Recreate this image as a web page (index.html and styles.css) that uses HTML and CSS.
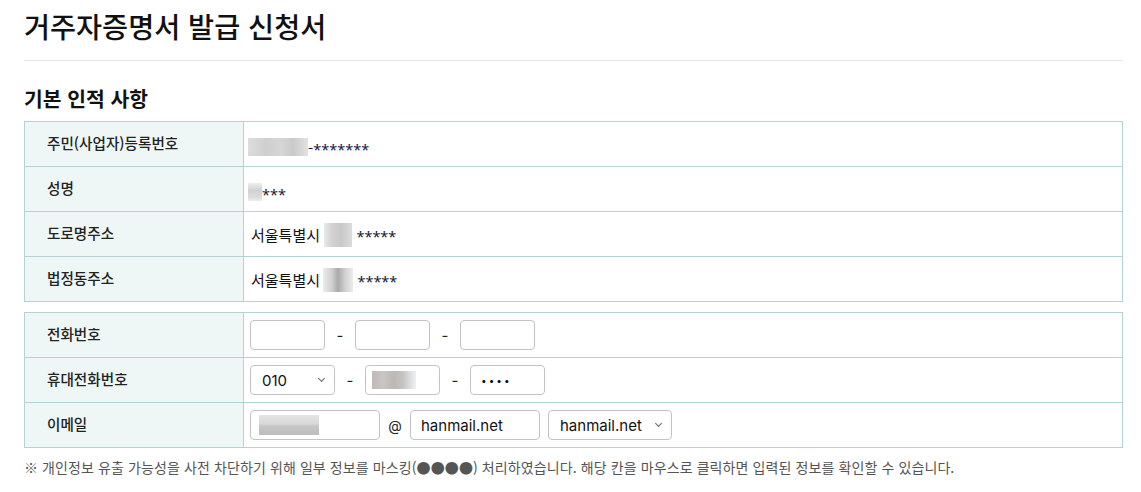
FILE: index.html
```html
<!DOCTYPE html>
<html lang="ko">
<head>
<meta charset="utf-8">
<title>거주자증명서 발급 신청서</title>
<link rel="stylesheet" href="styles.css">
</head>
<body>
<div class="page">
  <h1 class="title">거주자증명서 발급 신청서</h1>
  <h2 class="section">기본 인적 사항</h2>
  <table class="info">
    <tr>
      <th>주민(사업자)등록번호</th>
      <td class="v v-top"><span class="blur b-rrn"></span>-<span class="ast">*******</span></td>
    </tr>
    <tr>
      <th>성명</th>
      <td class="v v-top"><span class="blur b-name"></span><span class="ast">***</span></td>
    </tr>
    <tr>
      <th>도로명주소</th>
      <td class="v v-addr">서울특별시 <span class="blur b-addr"></span> <span class="ast">*****</span></td>
    </tr>
    <tr>
      <th>법정동주소</th>
      <td class="v v-addr">서울특별시 <span class="blur b-addr2"></span> <span class="ast">*****</span></td>
    </tr>
  </table>

  <table class="info second">
    <tr>
      <th>전화번호</th>
      <td>
        <div class="fields">
          <span class="box w75"></span><span class="dash">-</span>
          <span class="box w75"></span><span class="dash">-</span>
          <span class="box w75"></span>
        </div>
      </td>
    </tr>
    <tr>
      <th>휴대전화번호</th>
      <td>
        <div class="fields">
          <span class="box sel w85"><span>010</span><span class="chev"></span></span><span class="dash">-</span>
          <span class="box w75"><span class="blur b-phone"></span></span><span class="dash">-</span>
          <span class="box w75 dots">••••</span>
        </div>
      </td>
    </tr>
    <tr>
      <th>이메일</th>
      <td>
        <div class="fields">
          <span class="box w130"><span class="blur b-mail"></span></span><span class="at">@</span>
          <span class="box w130 txt">hanmail.net</span>
          <span class="box sel w124 gapl"><span>hanmail.net</span><span class="chev"></span></span>
        </div>
      </td>
    </tr>
  </table>
  <p class="note">※ 개인정보 유출 가능성을 사전 차단하기 위해 일부 정보를 마스킹(●●●●) 처리하였습니다. 해당 칸을 마우스로 클릭하면 입력된 정보를 확인할 수 있습니다.</p>
</div>
</body>
</html>
```
FILE: styles.css
```css
* { box-sizing: border-box; }
body {
  margin: 0;
  background: #fff;
  font-family: "Noto Sans CJK KR", "Noto Sans", sans-serif;
  color: #222;
}
.page {
  padding: 0 18px 0 24px;
}
.title {
  margin: 0;
  padding-top: 6px;
  height: 61px;
  font-size: 28.3px;
  font-weight: 500;
  line-height: 40px;
  color: #111;
  border-bottom: 1px solid #e4e4e4;
}
.section {
  margin: 0;
  padding-top: 22px;
  height: 60px;
  font-size: 20.4px;
  font-weight: 700;
  line-height: 30px;
  color: #111;
}
.info {
  width: 100%;
  border-collapse: collapse;
  border: 1px solid #b5d3d6;
}
.info th, .info td {
  border: 1px solid #b5d3d6;
  height: 45px;
  padding: 0;
}
.info th {
  width: 219px;
  background: #eef7f6;
  text-align: left;
  font-weight: 500;
  font-size: 14.6px;
  color: #222;
  padding-left: 22px;
  padding-bottom: 3px;
}
.v {
  font-size: 15px;
  color: #111;
}
.ast {
  font-family: "Noto Sans", sans-serif;
  font-size: 14.5px;
  color: #1a1a2e;
  position: relative;
  top: 1px;
}
.v-top { padding: 6px 0 0 4px !important; }
.v-addr { padding: 3px 0 0 7px !important; }
.blur {
  display: inline-block;
  vertical-align: middle;
  background: linear-gradient(90deg, #ddd 0, #cfcfcf 30%, #d6d6d6 55%, #cacaca 75%, #e2e2e2 100%);
}
.b-rrn { width: 60px; height: 18px; margin-top: -4px; }
.b-name { width: 14px; height: 18px; margin-top: -4px; background: linear-gradient(180deg, #eee, #d2d2d2 40%, #dcdcdc 80%, #eee); }
.b-addr { width: 28px; height: 24px; margin-top: -4px; background: linear-gradient(90deg, #eaeaea 0, #d4d4d4 25%, #c8c8c8 60%, #dcdcdc 100%); }
.b-addr2 { width: 30px; height: 24px; margin-top: -4px; margin-left: -1px; background: linear-gradient(90deg, #ececec 0, #cfcfcf 30%, #a9a9a9 50%, #d2d2d2 75%, #ececec 100%); }
.second { margin-top: 10px; }
.second td { padding-left: 6px; }
.fields {
  display: flex;
  align-items: center;
  height: 44px;
}
.box {
  display: inline-flex;
  align-items: center;
  height: 30px;
  border: 1px solid #c3c3c3;
  border-radius: 4px;
  background: #fff;
  font-family: "Inter", "Noto Sans", sans-serif;
  font-size: 15px;
  color: #111;
}
.w75 { width: 75px; }
.w85 { width: 85px; }
.w130 { width: 130px; }
.w124 { width: 124px; }
.dash {
  width: 30px;
  text-align: center;
  font-family: "Inter", sans-serif;
  font-size: 15px;
  color: #222;
}
.at {
  width: 30px;
  text-align: center;
  font-family: "Inter", sans-serif;
  font-size: 14px;
  color: #222;
}
.sel {
  justify-content: space-between;
  padding: 0 10px 0 11px;
}
.chev {
  width: 5px;
  height: 5px;
  border-right: 1px solid #666;
  border-bottom: 1px solid #666;
  transform: rotate(45deg);
  margin-top: -3px;
}
.txt { padding-left: 10px; }
.dots { padding-left: 10px; font-size: 10px; letter-spacing: 2px; }
.gapl { margin-left: 8px; }
.b-phone { width: 44px; height: 18px; margin-left: 6px; background: linear-gradient(90deg, #c0b9b6 0, #c9c6c4 25%, #bcb8b6 50%, #c6c4c3 70%, #eef1f4 100%); }
.b-mail { width: 60px; height: 20px; margin-left: 8px; background: linear-gradient(180deg, #e4e4e4 0, #d8d8d8 45%, #c6c6c6 55%, #bdbdbd 100%); }
.note {
  margin: 9px 0 0;
  font-size: 14px;
  letter-spacing: 0.1px;
  color: #555;
  line-height: 20px;
}
```
